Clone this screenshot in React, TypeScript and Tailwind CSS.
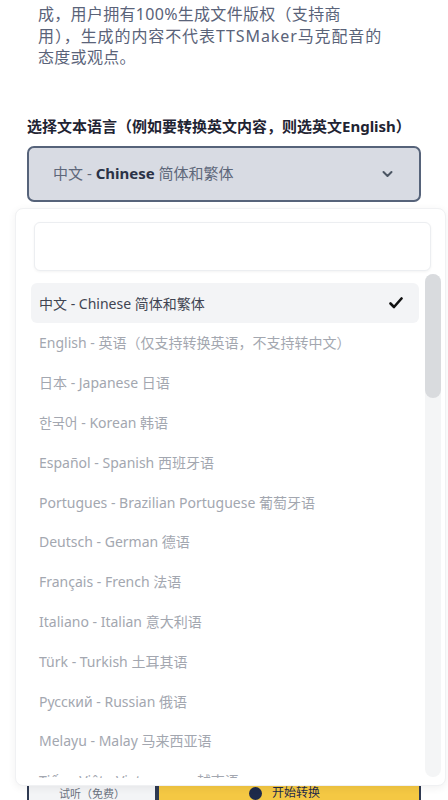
import React from "react";

const FONT = { fontFamily: '"Noto Sans", "Noto Sans CJK SC", sans-serif' };

const langs = [
  "English - 英语（仅支持转换英语，不支持转中文）",
  "日本 - Japanese 日语",
  "한국어 - Korean 韩语",
  "Español - Spanish 西班牙语",
  "Portugues - Brazilian Portuguese 葡萄牙语",
  "Deutsch - German 德语",
  "Français - French 法语",
  "Italiano - Italian 意大利语",
  "Türk - Turkish 土耳其语",
  "Русский - Russian 俄语",
  "Melayu - Malay 马来西亚语",
  "Tiếng Việt - Vietnamese 越南语",
  "ภาษาไทย - Thai 泰语",
];

export default function App() {
  return (
    <div className="relative w-[448px] h-[800px] overflow-hidden bg-white" style={FONT}>
      {/* page content */}
      <div className="flex flex-col px-[27px]">
        <div className="pl-[11px] pt-[4px] text-[16px] leading-[21.5px] text-[#5a6379] tracking-[0.3px]">
          <div>成，用户拥有100%生成文件版权（支持商</div>
          <div className="tracking-[0.9px]">用），生成的内容不代表TTSMaker马克配音的</div>
          <div>态度或观点。</div>
        </div>
        <div className="mt-[47px] text-[15px] leading-[20px] font-bold text-[#1f2433] whitespace-nowrap">
          选择文本语言（例如要转换英文内容，则选英文English）
        </div>
        <div className="mt-[10px] h-[56px] w-[394px] rounded-[7px] border-2 border-[#56637a] bg-[#d8dbe3] flex items-center justify-between pl-[24px] pr-[26px]">
          <span className="text-[15px] text-[#5e677a]">
            中文 - <span className="font-bold text-[#2a3247]">Chinese</span> 简体和繁体
          </span>
          <svg width="11" height="8" viewBox="0 0 11 8">
            <path d="M1.5 2 L5.5 6 L9.5 2" fill="none" stroke="#4b5563" strokeWidth="2" strokeLinecap="round" strokeLinejoin="round" />
          </svg>
        </div>
        <div className="h-[572px]" />
        <div className="flex h-[44px] w-[394px]">
          <div className="w-[130px] border-2 border-[#2f3a52] rounded-l-md bg-[#f3f4f6] flex items-start justify-center text-[11px] leading-[14px] text-[#6b7280] pt-[11px]">
            试听（免费）
          </div>
          <div className="flex-1 border-2 border-[#2f3a52] border-l-2 rounded-r-md bg-[#f4c843] flex items-start gap-[10px] text-[12px] leading-[14px] text-[#1e2a4a] pt-[10px]">
            <span className="ml-[90px] mt-[1px] w-[13px] h-[13px] rounded-full bg-[#1e2a4a]" />
            <span>开始转换</span>
          </div>
        </div>
      </div>

      {/* dropdown overlay */}
      <div className="absolute left-[15px] right-[2px] top-[208px] h-[578px] bg-white rounded-lg border border-[#f0f1f3] shadow-[0_2px_8px_rgba(0,0,0,0.06)] flex flex-col pl-[15px] pt-[13px]">
        <div className="ml-[3px] w-[397px] h-[49px] shrink-0 rounded-md border border-[#eceef1] bg-white shadow-[0_1px_3px_rgba(0,0,0,0.05)]" />
        <div className="mt-[3px] flex h-[504px] shrink-0 overflow-hidden">
          <div className="w-[388px] flex flex-col overflow-hidden pt-[9px]">
            <div className="h-[40px] shrink-0 rounded-md bg-[#f3f4f6] flex items-center justify-between pl-[8px] pr-[16px]">
              <span className="text-[14px] text-[#3f4452]">中文 - Chinese 简体和繁体</span>
              <svg width="14" height="12" viewBox="0 0 14 12">
                <path d="M1.5 6.5 L5 10 L12.5 1.5" fill="none" stroke="#111111" strokeWidth="2.6" strokeLinecap="round" strokeLinejoin="round" />
              </svg>
            </div>
            {langs.map((l) => (
              <div key={l} className="h-[39.8px] shrink-0 flex items-center pl-[8px] text-[14px] text-[#a3a7b0] whitespace-nowrap">
                {l}
              </div>
            ))}
          </div>
          <div className="ml-[6px] w-[16px] h-[503px] rounded-full bg-[#f4f5f6] flex flex-col">
            <div className="w-[16px] h-[124px] rounded-full bg-[#d9dbde]" />
          </div>
        </div>
      </div>
    </div>
  );
}
